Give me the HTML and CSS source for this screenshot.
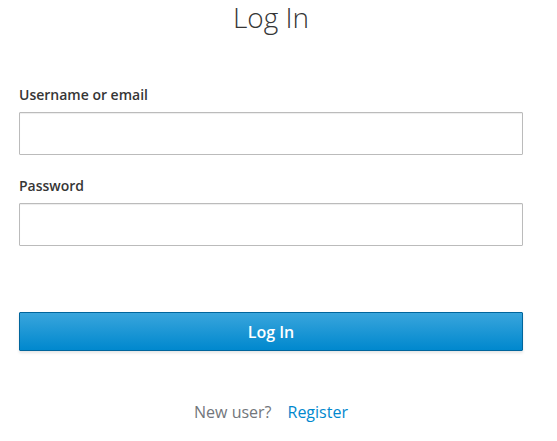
FILE: index.html
```html
<!DOCTYPE html>
<html lang="en">
<head>
<meta charset="utf-8">
<title>Log In</title>
<link rel="stylesheet" href="styles.css">
</head>
<body>
<div class="page">
  <h1 class="title">Log In</h1>
  <form class="form" onsubmit="return false">
    <div class="group">
      <label class="label" for="username">Username or email</label>
      <input class="input" id="username" type="text">
    </div>
    <div class="group">
      <label class="label" for="password">Password</label>
      <input class="input" id="password" type="password">
    </div>
    <button class="btn" type="submit">Log In</button>
  </form>
  <div class="footer">
    <span class="muted">New user?</span>
    <a class="link" href="#">Register</a>
  </div>
</div>
</body>
</html>
```
FILE: styles.css
```css
* { box-sizing: border-box; }
html, body { margin: 0; background: #fff; }
body {
  font-family: "Open Sans", "Liberation Sans", sans-serif;
  color: #363636;
}
.page {
  padding: 0 34px 0 19px;
  display: flex;
  flex-direction: column;
}
.title {
  margin: 0;
  font-size: 28px;
  line-height: 34px;
  font-weight: 300;
  text-align: center;
  color: #363636;
}
.form {
  margin-top: 51px;
  display: flex;
  flex-direction: column;
}
.group {
  display: flex;
  flex-direction: column;
  margin-bottom: 21px;
}
.label {
  font-size: 14px;
  line-height: 20px;
  font-weight: 600;
  margin-bottom: 7px;
}
.input {
  height: 43px;
  border: 1px solid #bbb;
  border-radius: 1px;
  box-shadow: inset 0 1px 1px rgba(3,3,3,0.075);
  background: #fff;
  font: inherit;
  padding: 0 10px;
}
.btn {
  margin-top: 45px;
  height: 39px;
  border: 1px solid #00659c;
  border-radius: 1px;
  background: linear-gradient(to bottom, #39a5dc 0%, #0088ce 100%);
  color: #fff;
  font-family: inherit;
  font-size: 16px;
  font-weight: 600;
  box-shadow: 0 2px 3px rgba(3,3,3,0.1);
}
.footer {
  margin-top: 51px;
  display: flex;
  justify-content: center;
  gap: 16px;
  font-size: 16px;
  line-height: 20px;
}
.muted { color: #72767b; }
.link { color: #0088ce; text-decoration: none; }
```
